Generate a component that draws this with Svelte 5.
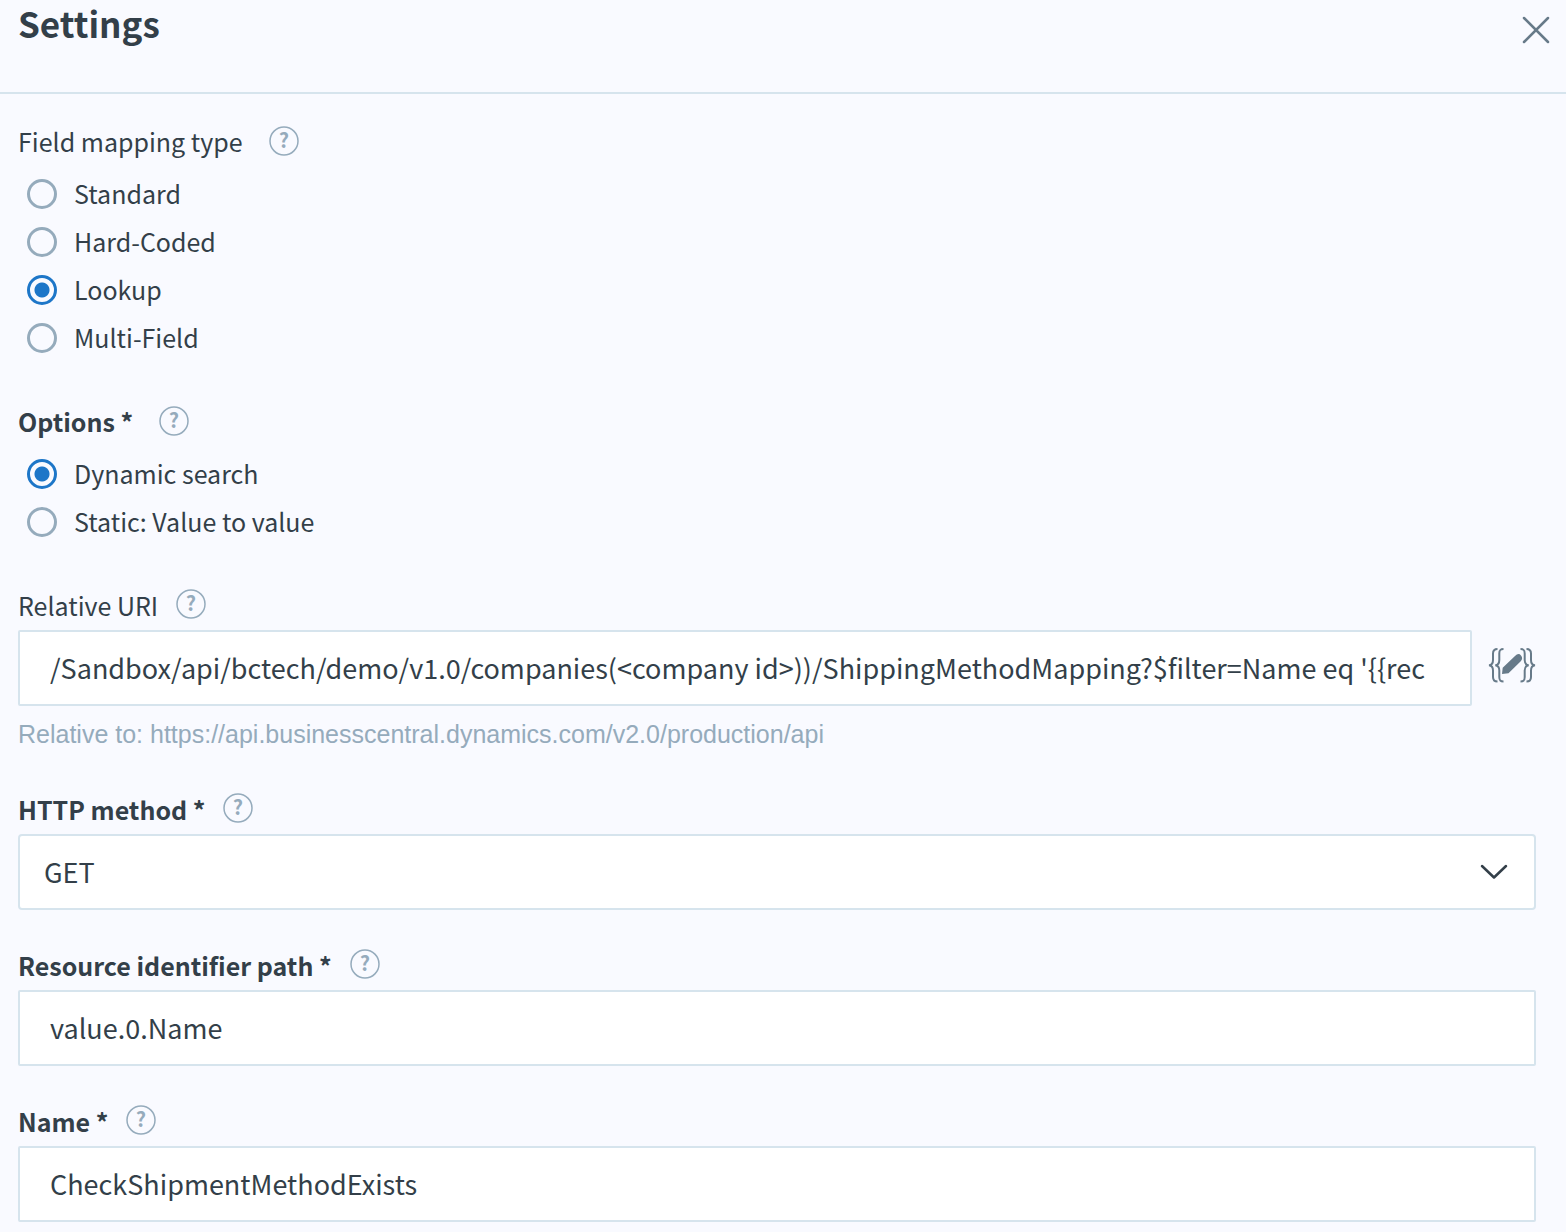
<script>
  let mappingType = $state('lookup');
  let lookupOption = $state('dynamic');
  let relativeUri = $state(
    "/Sandbox/api/bctech/demo/v1.0/companies(<company id>))/ShippingMethodMapping?$filter=Name eq '{{rec"
  );
  let httpMethod = $state('GET');
  let identifierPath = $state('value.0.Name');
  let name = $state('CheckShipmentMethodExists');

  const mappingTypes = [
    { value: 'standard', label: 'Standard' },
    { value: 'hardCoded', label: 'Hard-Coded' },
    { value: 'lookup', label: 'Lookup' },
    { value: 'multiField', label: 'Multi-Field' }
  ];

  const lookupOptions = [
    { value: 'dynamic', label: 'Dynamic search' },
    { value: 'static', label: 'Static: Value to value' }
  ];
</script>

{#snippet help(label)}
  <button type="button" class="help" aria-label="Help: {label}">
    <svg viewBox="0 0 30 30" aria-hidden="true">
      <circle cx="15" cy="15" r="14" />
      <text x="15" y="22" text-anchor="middle">?</text>
    </svg>
  </button>
{/snippet}

<main class="drawer">
  <header>
    <h1>Settings</h1>
    <button type="button" class="close" aria-label="Close">
      <svg viewBox="0 0 28 28" aria-hidden="true">
        <path d="M2 2L26 26M26 2L2 26" />
      </svg>
    </button>
  </header>

  <form>
    <div class="group" role="radiogroup" aria-labelledby="mapping-label">
      <div class="label-row">
        <span id="mapping-label">Field mapping type</span>
        {@render help('Field mapping type')}
      </div>
      {#each mappingTypes as type (type.value)}
        <label class="radio">
          <input type="radio" name="mappingType" value={type.value} bind:group={mappingType} />
          {type.label}
        </label>
      {/each}
    </div>

    <div class="group" role="radiogroup" aria-labelledby="options-label">
      <div class="label-row required">
        <span id="options-label">Options *</span>
        {@render help('Options')}
      </div>
      {#each lookupOptions as option (option.value)}
        <label class="radio">
          <input type="radio" name="lookupOption" value={option.value} bind:group={lookupOption} />
          {option.label}
        </label>
      {/each}
    </div>

    <div class="field">
      <div class="label-row">
        <label for="uri">Relative URI</label>
        {@render help('Relative URI')}
      </div>
      <div class="uri-row">
        <input id="uri" class="control" type="text" bind:value={relativeUri} />
        <button type="button" class="handlebars" aria-label="Open handlebars editor">
          <svg viewBox="0 0 48 36" aria-hidden="true">
            <g class="braces">
              <path d="M9.5 2C6 2 5 3.500 5 6.500V13C5 16 4 18 1 18.300C4 18.600 5 20.500 5 23.500V30C5 33 6 34.500 9.500 34.500" />
              <path d="M15.500 2C12 2 11.300 3.500 11.300 6.500V13C11.300 16 10.300 18 7.300 18.300C10.300 18.600 11.300 20.500 11.300 23.500V30C11.300 33 12 34.500 15.500 34.500" />
              <path d="M38.500 2C42 2 43 3.500 43 6.500V13C43 16 44 18 47 18.300C44 18.600 43 20.500 43 23.500V30C43 33 42 34.500 38.500 34.500" />
              <path d="M32.500 2C36 2 36.700 3.500 36.700 6.500V13C36.700 16 37.700 18 40.700 18.300C37.700 18.600 36.700 20.500 36.700 23.500V30C36.700 33 36 34.500 32.500 34.500" />
            </g>
            <path class="pencil" d="M14 27L14.700 20.800L27 9Q30.500 5.500 33 8.500Q35.500 11.500 32.500 14.500L20.500 26.300Z" />
          </svg>
        </button>
      </div>
      <p class="hint">Relative to: https://api.businesscentral.dynamics.com/v2.0/production/api</p>
    </div>

    <div class="field">
      <div class="label-row required">
        <label for="method">HTTP method *</label>
        {@render help('HTTP method')}
      </div>
      <div class="select">
        <select id="method" class="control" bind:value={httpMethod}>
          <option>GET</option>
          <option>POST</option>
        </select>
        <svg viewBox="0 0 28 16" aria-hidden="true">
          <path d="M2 2L14 13.500L26 2" />
        </svg>
      </div>
    </div>

    <div class="field">
      <div class="label-row required">
        <label for="path">Resource identifier path *</label>
        {@render help('Resource identifier path')}
      </div>
      <input id="path" class="control" type="text" bind:value={identifierPath} />
    </div>

    <div class="field">
      <div class="label-row required">
        <label for="name">Name *</label>
        {@render help('Name')}
      </div>
      <input id="name" class="control" type="text" bind:value={name} />
    </div>
  </form>
</main>

<style>
  :global(body) {
    background: #f9faff;
  }

  .drawer {
    color: #333f49;
    font-family: 'Noto Sans CJK SC', 'Noto Sans', sans-serif;
    font-size: 25px;
    line-height: 46px;
  }

  header {
    display: flex;
    justify-content: space-between;
    align-items: flex-start;
    height: 92px;
    padding: 0 16px 0 18px;
    border-bottom: 2px solid #d6e4ed;
  }

  h1 {
    margin: 0;
    font-size: 35px;
    font-weight: 600;
    line-height: 46px;
  }

  button {
    padding: 0;
    border: 0;
    background: none;
    cursor: pointer;
  }

  svg {
    display: block;
    fill: none;
  }

  .close {
    margin-top: 16px;
  }

  .close svg {
    width: 28px;
    height: 28px;
    stroke: #677a89;
    stroke-width: 2.5;
    stroke-linecap: round;
  }

  form {
    display: flex;
    flex-direction: column;
    gap: 32px;
    padding: 24px 30px 10px 18px;
  }

  .group {
    padding-bottom: 4px;
  }

  .label-row {
    display: flex;
    align-items: center;
    gap: 18px;
    padding-bottom: 2px;
  }

  .group .label-row {
    gap: 26px;
    margin-bottom: 4px;
  }

  .required {
    font-weight: 600;
  }

  .help {
    margin-bottom: 2px;
  }

  .group .help {
    margin-bottom: 0;
  }

  .help svg {
    width: 30px;
    height: 30px;
  }

  .help circle {
    stroke: #95abbc;
    stroke-width: 1.5;
  }

  .help text {
    fill: #95abbc;
    font-family: 'Noto Sans CJK SC', 'Noto Sans', sans-serif;
    font-size: 20px;
    font-weight: 700;
  }

  .radio {
    display: flex;
    align-items: center;
    gap: 17px;
    width: fit-content;
    padding: 0 0 2px 9px;
  }

  .radio input {
    appearance: none;
    box-sizing: border-box;
    width: 30px;
    height: 30px;
    margin: 2px 0 0;
    border: 3px solid #95abbc;
    border-radius: 50%;
  }

  .radio input:checked {
    border-color: #1d76c8;
    background: radial-gradient(circle, #1d76c8 7px, transparent 8px);
  }

  .control {
    appearance: none;
    display: block;
    box-sizing: border-box;
    width: 100%;
    height: 76px;
    margin: 0;
    padding: 0 30px 2px;
    border: 2px solid #d6e4ed;
    border-radius: 4px;
    background: #fff;
    color: inherit;
    font-family: inherit;
    font-size: 27px;
  }

  input.control {
    border-radius: 2px;
  }

  .uri-row {
    display: flex;
    align-items: center;
    gap: 16px;
  }

  .uri-row .control {
    flex: 1;
    min-width: 0;
  }

  .handlebars {
    margin-bottom: 6px;
  }

  .handlebars svg {
    width: 48px;
    height: 36px;
  }

  .braces {
    stroke: #677a89;
    stroke-width: 2;
  }

  .pencil {
    fill: #677a89;
  }

  .hint {
    margin: 8px 0 0;
    color: #95abbc;
    font-family: 'Liberation Sans', Arial, sans-serif;
    font-size: 25px;
    line-height: 40px;
  }

  .select {
    position: relative;
  }

  .select .control {
    padding: 0 72px 2px 24px;
  }

  .select svg {
    position: absolute;
    top: 30px;
    right: 28px;
    width: 28px;
    height: 16px;
    stroke: #333f49;
    stroke-width: 2.5;
    stroke-linecap: round;
    stroke-linejoin: round;
    pointer-events: none;
  }
</style>
